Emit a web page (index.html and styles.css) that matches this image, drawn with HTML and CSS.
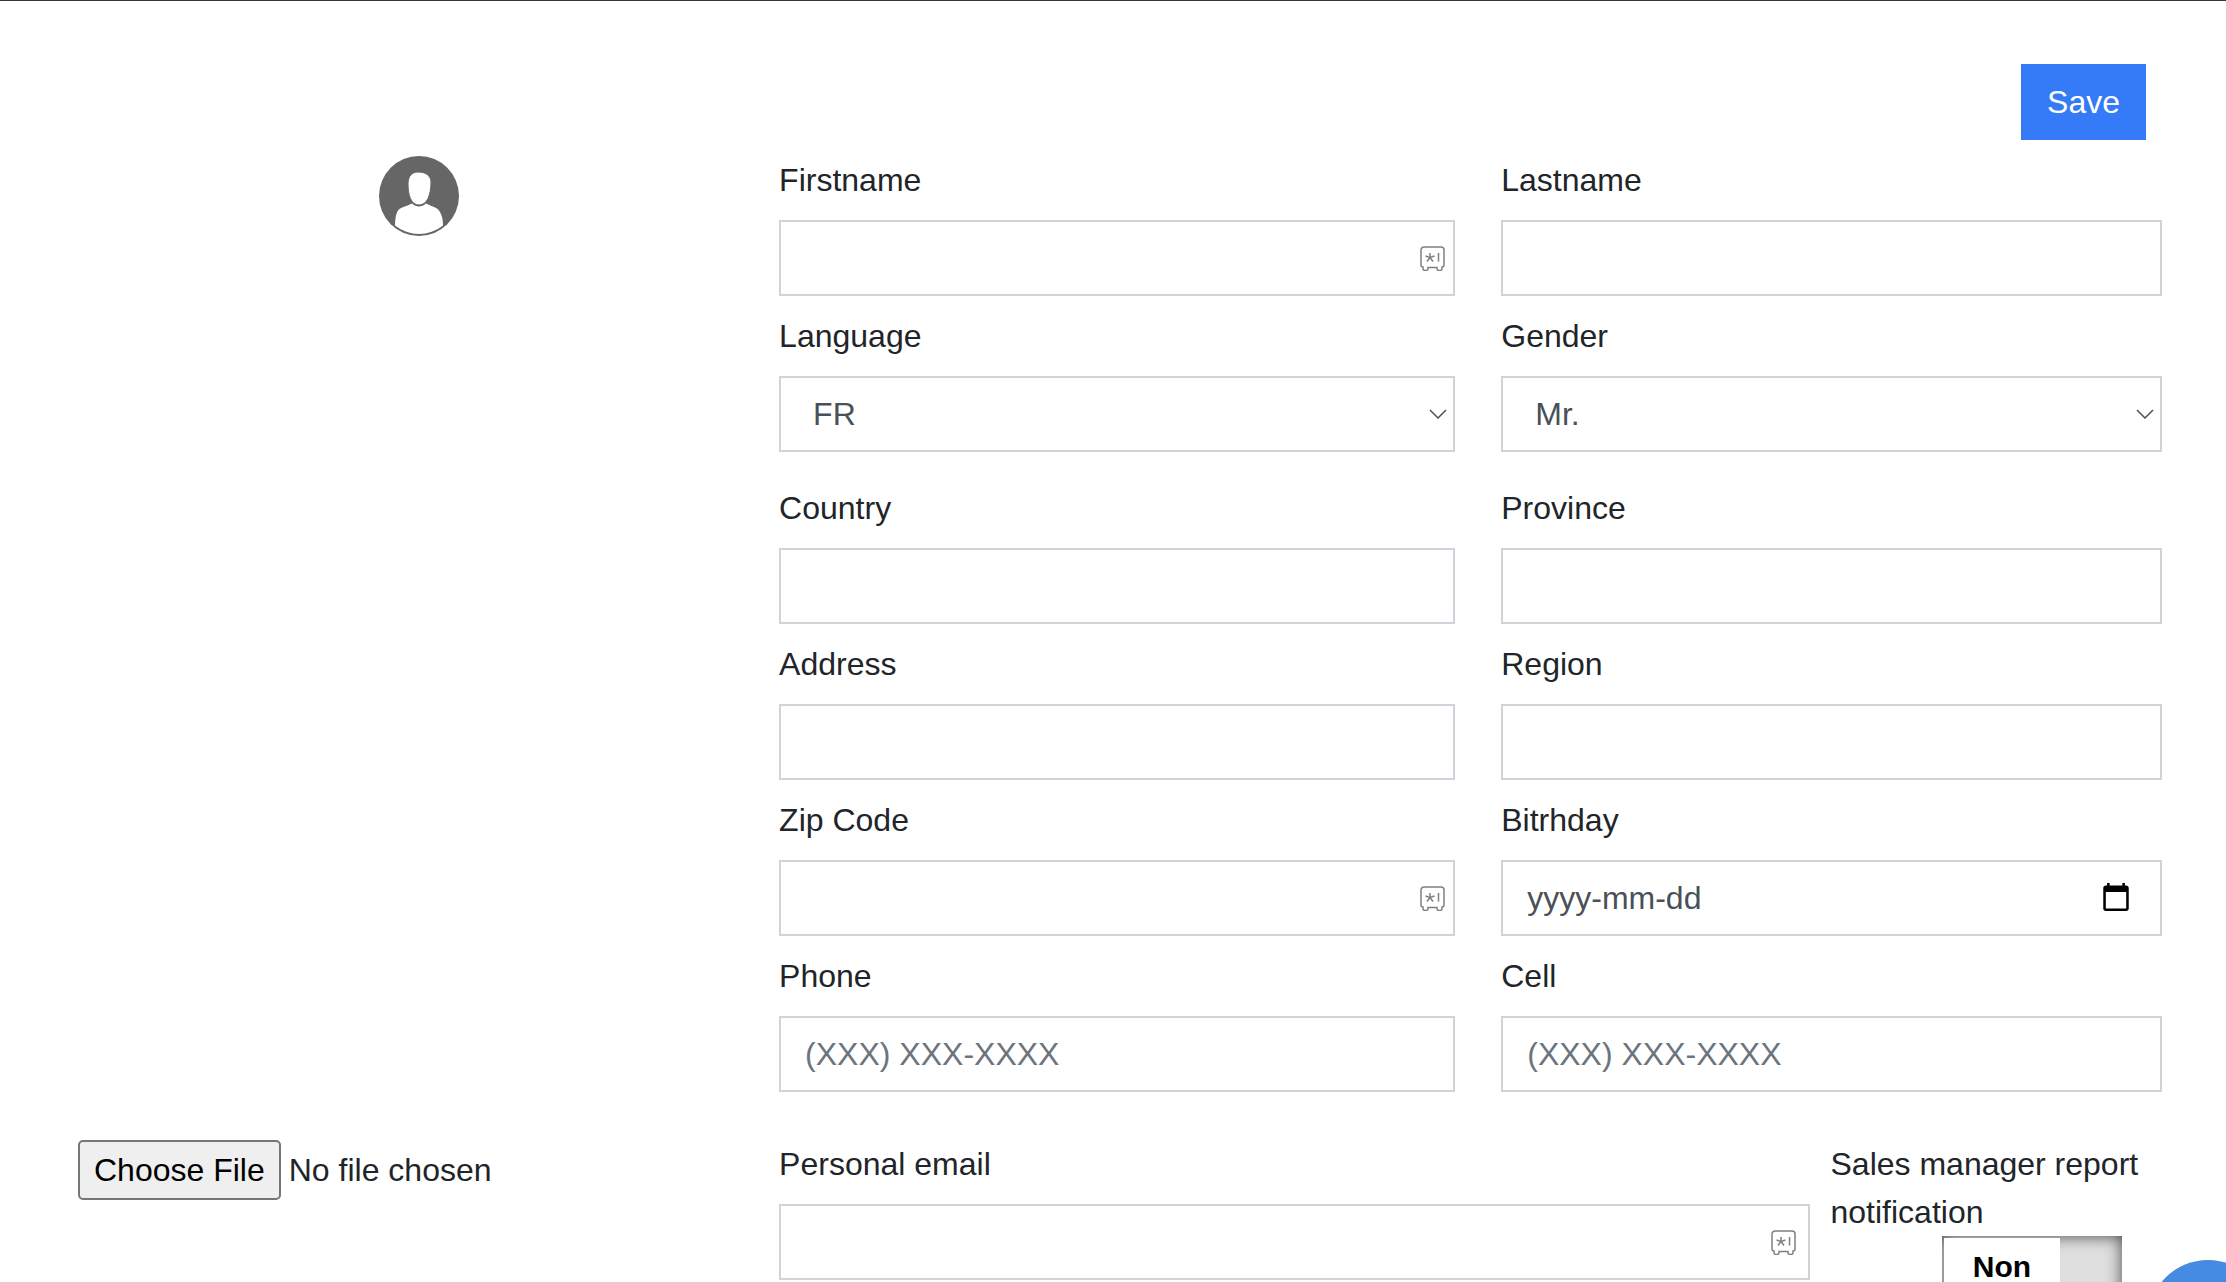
FILE: index.html
```html
<!DOCTYPE html>
<html lang="en">
  <head>
    <meta charset="UTF-8" />
    <meta name="viewport" content="width=device-width, initial-scale=1.0" />
    <title>Profile</title>
    <link rel="stylesheet" href="styles.css">
  </head>
  <body>
    <svg class="sprite">
      <symbol id="safe" viewBox="0 0 25 25">
        <path d="M4 1h17a3 3 0 0 1 3 3v15a2 2 0 0 1-2 2v1.500a2 2 0 0 1-2 2h-1a2 2 0 0 1-2-2V21.500H8v1a2 2 0 0 1-2 2H5a2 2 0 0 1-2-2V21a2 2 0 0 1-2-2V4a3 3 0 0 1 3-3z" />
        <path d="M10 7v4.500M5.500 10l4.500 1.500 4.500-1.500M7 15.500l3-4 3 4M18.500 7v8.500" />
      </symbol>
      <symbol id="chevron" viewBox="0 0 18 10">
        <path d="M1 1l8 8 8-8" />
      </symbol>
    </svg>
    <form action="#" class="profile">
      <div class="toolbar">
        <button type="submit" class="save">Save</button>
      </div>
      <div class="layout">
        <div class="avatar">
          <svg width="80" height="80" viewBox="0 0 80 80">
            <circle cx="40" cy="40" r="40" fill="#666" />
            <path d="M16 69.500c0-6 1-12 3-15 2-3 8-4 14-7 4 4 10 4 14 0 6 3 11 4 13 7 3 4 4 9 4 15a38 38 0 0 1-48 0z" fill="#fff" />
            <path d="M39 16c8 0 13 4 13 10 0 13-4 23-12 23s-11-10-11-21c0-8 4-12 10-12z" fill="#fff" stroke="#666" />
          </svg>
        </div>
        <div class="fields">
          <div class="group">
            <div class="field">
              <label for="firstname">Firstname</label>
              <div class="control">
                <input type="text" name="firstname" id="firstname" />
                <svg class="safe"><use href="#safe" /></svg>
              </div>
            </div>
            <div class="field">
              <label for="lastname">Lastname</label>
              <input type="text" name="lastname" id="lastname" />
            </div>
            <div class="field">
              <label for="language">Language</label>
              <div class="control">
                <select name="language" id="language">
                  <option>FR</option>
                  <option>EN</option>
                </select>
                <svg class="chevron"><use href="#chevron" /></svg>
              </div>
            </div>
            <div class="field">
              <label for="gender">Gender</label>
              <div class="control">
                <select name="gender" id="gender">
                  <option>Mr.</option>
                  <option>Mrs.</option>
                </select>
                <svg class="chevron"><use href="#chevron" /></svg>
              </div>
            </div>
          </div>
          <div class="group">
            <div class="field">
              <label for="country">Country</label>
              <input type="text" name="country" id="country" />
            </div>
            <div class="field">
              <label for="province">Province</label>
              <input type="text" name="province" id="province" />
            </div>
            <div class="field">
              <label for="address">Address</label>
              <input type="text" name="address" id="address" />
            </div>
            <div class="field">
              <label for="region">Region</label>
              <input type="text" name="region" id="region" />
            </div>
            <div class="field">
              <label for="zip">Zip Code</label>
              <div class="control">
                <input type="text" name="zip" id="zip" />
                <svg class="safe"><use href="#safe" /></svg>
              </div>
            </div>
            <div class="field">
              <label for="birthday">Bitrhday</label>
              <div class="control">
                <input type="text" name="birthday" id="birthday" class="date" placeholder="yyyy-mm-dd" />
                <svg class="calendar" viewBox="2 1 20 22">
                  <path d="M20 3h-1V1h-2v2H7V1H5v2H4c-1.100 0-2 .9-2 2v16c0 1.100.9 2 2 2h16c1.100 0 2-.9 2-2V5c0-1.100-.9-2-2-2zm0 18H4V8h16v13z" />
                </svg>
              </div>
            </div>
            <div class="field">
              <label for="phone">Phone</label>
              <input type="text" name="phone" id="phone" placeholder="(XXX) XXX-XXXX" />
            </div>
            <div class="field">
              <label for="cell">Cell</label>
              <input type="text" name="cell" id="cell" placeholder="(XXX) XXX-XXXX" />
            </div>
          </div>
        </div>
        <input type="file" name="photo" class="file" aria-label="Photo" />
        <div class="contact">
          <div class="field">
            <label for="email">Personal email</label>
            <div class="control wide">
              <input type="text" name="email" id="email" />
              <svg class="safe"><use href="#safe" /></svg>
            </div>
          </div>
          <div class="notification">
            <label for="report">Sales manager report notification</label>
            <label class="switch">
              <input type="checkbox" name="report" id="report" />
              <span class="state">Non</span>
            </label>
          </div>
        </div>
      </div>
    </form>
    <button type="button" class="chat" aria-label="Chat"></button>
  </body>
</html>
```

FILE: styles.css
```css
* {
  margin: 0px;
  padding: 0px;
  box-sizing: border-box;
}
body {
  height: 100vh;
  overflow: hidden;
  border-top: 1px solid #3a3432;
  background-color: white;
  color: #212529;
  font-family: "Liberation Sans", Arial, sans-serif;
  font-size: 32px;
  line-height: 48px;
}
input,
select,
button {
  font: inherit;
}
.sprite {
  display: none;
}
.profile {
  padding: 63px 64px 0 78px;
}
.toolbar {
  display: flex;
  justify-content: flex-end;
  padding-right: 16px;
  margin-bottom: 16px;
}
.save {
  height: 76px;
  padding: 0 24px;
  border: 2px solid #357af6;
  background-color: #357af6;
  color: white;
}
.layout {
  display: grid;
  grid-template-columns: 33fr 67fr;
  gap: 48px 20px;
  align-items: start;
}
.avatar {
  display: flex;
  justify-content: center;
}
.fields {
  display: grid;
  gap: 32px;
}
.group {
  display: grid;
  grid-template-columns: 44fr 43fr;
  gap: 16px 46px;
}
.field {
  display: grid;
  gap: 16px;
}
.control {
  position: relative;
  display: grid;
}
.field input,
.field select {
  width: 100%;
  height: 76px;
  padding: 0 24px;
  border: 2px solid #ced4da;
  border-radius: 0;
  background-color: white;
  color: #495057;
}
.field select {
  appearance: none;
  padding: 0 32px;
}
.field input::placeholder {
  color: #6c757d;
  opacity: 1;
}
.field .date::placeholder {
  color: #495057;
}
.field input:focus {
  outline: 0;
}
/* icons lying over the right end of a control */
.safe {
  position: absolute;
  top: 26px;
  right: 10px;
  width: 25px;
  height: 25px;
  fill: none;
  stroke: #808080;
  stroke-width: 1.5;
}
.wide .safe {
  right: 14px;
}
.chevron {
  position: absolute;
  top: 33px;
  right: 8px;
  width: 18px;
  height: 10px;
  fill: none;
  stroke: #495057;
  stroke-width: 1.5;
  pointer-events: none;
}
.calendar {
  position: absolute;
  top: 23px;
  right: 33px;
  width: 26px;
  height: 28px;
}
.file {
  width: 100%;
}
.file::file-selector-button {
  height: 60px;
  margin-right: 8px;
  padding: 0 14px;
  border: 2px solid #767676;
  border-radius: 5px;
  background-color: #efefef;
  color: black;
  font: inherit;
}
.contact {
  display: grid;
  grid-template-columns: 28fr 9fr;
  gap: 20px;
  align-items: start;
}
.notification {
  display: flex;
  flex-direction: column;
}
.switch {
  display: flex;
  align-self: flex-end;
  width: 180px;
  height: 62px;
  margin-right: 40px;
  padding: 2px;
  background-color: #dfdfdf;
  box-shadow: inset 0 0 16px #444;
}
.switch input {
  appearance: none;
}
.state {
  width: 116px;
  background-color: white;
  color: black;
  font-size: 30px;
  font-weight: bold;
  line-height: 58px;
  text-align: center;
}
.chat {
  position: fixed;
  right: -42px;
  bottom: -98px;
  width: 120px;
  height: 120px;
  border: 0;
  border-radius: 50%;
  background-color: #468be2;
}
```
